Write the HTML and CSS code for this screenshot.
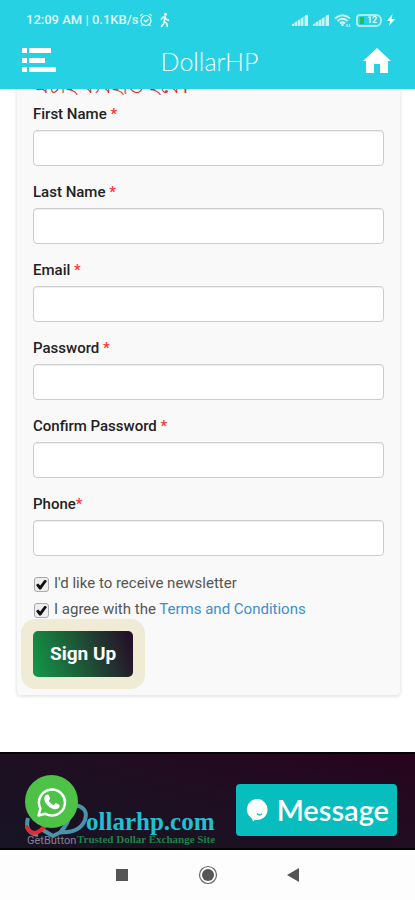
FILE: index.html
```html
<!DOCTYPE html>
<html lang="en">
<head>
<meta charset="utf-8">
<meta name="viewport" content="width=device-width, initial-scale=1">
<title>DollarHP</title>
<link rel="stylesheet" href="styles.css">
</head>
<body>
<header class="top">
  <div class="status">
    <span class="status-text">12:09 AM | 0.1KB/s</span>
    <svg class="alarm" width="14" height="14" viewBox="0 0 14 14" fill="none" stroke="currentColor" stroke-width="1.2"><circle cx="7" cy="7.5" r="5"/><path d="M1 3l2.500-2M13 3l-2.500-2M4.800 7l2 1.800L9.500 6M3.500 11.500L2.500 13M10.500 11.500l1 1.500"/></svg>
    <svg class="walk" width="12" height="16" viewBox="0 0 12 16" fill="none" stroke="currentColor" stroke-width="1.500"><circle cx="6.500" cy="2.200" r="1.500" fill="currentColor" stroke="none"/><path d="M2 8l1.500-2.500L6 4.800l1.500 2.700 2.500 1M6 5l-.8 4.500 2.500 2L8.500 15M5.200 9.500L4.500 12 2 15"/></svg>
    <span class="status-right">
      <svg width="16" height="12" viewBox="0 0 16 12" fill="currentColor" opacity=".75"><path d="M0 12v-2l16-10v12z" opacity=".5"/><path d="M0 10h2v2H0zM3 8h2v4H3zM6 6h2v6H6zM9 4h2v8H9zM13 1h3v11h-3z"/></svg>
      <svg width="16" height="12" viewBox="0 0 16 12" fill="currentColor" opacity=".75"><path d="M0 12v-2l16-10v12z" opacity=".5"/><path d="M0 10h2v2H0zM3 8h2v4H3zM6 6h2v6H6zM9 4h2v8H9zM13 1h3v11h-3z"/></svg>
      <svg width="17" height="13" viewBox="0 0 17 13" fill="none" stroke="currentColor" stroke-width="2" opacity=".8"><path d="M1 4.500q7.500-6.500 15 0M3.500 7q5-4.400 10 0M6 9.500q2.500-2.200 5 0M8.500 10v2"/><path d="M13 10v3M15.500 10v3" stroke-width="1.200"/></svg>
      <span class="battery"><span class="level"></span>12</span>
      <svg width="8" height="12" viewBox="0 0 8 12" fill="currentColor"><path d="M5.500 0L0 7h3.200L2 12l6-7H4.600z"/></svg>
    </span>
  </div>
  <div class="bar">
    <button class="icon-btn" type="button" aria-label="Menu"><svg width="34" height="25" viewBox="0 0 34 25" fill="currentColor"><path d="M0 0h5v5H0zM7 0h22v5H7zM0 10h5v5H0zM7 10h16v5H7zM0 19h5v5H0zM7 19h27v5H7z"/></svg></button>
    <h1 class="title">DollarHP</h1>
    <button class="icon-btn" type="button" aria-label="Home"><svg width="28" height="25" viewBox="0 0 28 25" fill="currentColor"><path d="M14 0l14 13h-3v12h-8v-9h-6v9H3V13H0z"/></svg></button>
  </div>
</header>
<main class="page">
  <form class="card">
    <p class="notice" lang="bn">এটাই ব্যবহৃত হবে।</p>
    <div class="field"><label for="first">First Name <span class="req">*</span></label><input id="first" type="text"></div>
    <div class="field"><label for="last">Last Name <span class="req">*</span></label><input id="last" type="text"></div>
    <div class="field"><label for="email">Email <span class="req">*</span></label><input id="email" type="email"></div>
    <div class="field"><label for="pass">Password <span class="req">*</span></label><input id="pass" type="password"></div>
    <div class="field"><label for="confirm">Confirm Password <span class="req">*</span></label><input id="confirm" type="password"></div>
    <div class="field last"><label for="phone">Phone<span class="req">*</span></label><input id="phone" type="tel"></div>
    <div class="check"><input id="news" type="checkbox" checked><label for="news">I'd like to receive newsletter</label></div>
    <div class="check"><input id="terms" type="checkbox" checked><label for="terms">I agree with the <a href="#terms">Terms and Conditions</a></label></div>
    <button class="signup" type="button">Sign Up</button>
  </form>
</main>
<footer class="footer">
  <div class="brand">
    <svg class="mark" width="66" height="38" viewBox="0 0 66 38" fill="none"><path d="M3 15q-4 15 10 17M16 26l12 7 8-4" stroke="#4b93a6" stroke-width="4"/><path d="M1 23q6 12 16 3l3-3" stroke="#e22a32" stroke-width="4"/><path d="M36 28Q43 22 46 8M34 29Q54 31 60 17Q64 5 50 2" stroke="#4b93a6" stroke-width="4"/></svg>
    <div class="words"><span class="name">ollarhp.com</span><span class="tagline">Trusted Dollar Exchange Site</span></div>
    <a class="whatsapp" href="#whatsapp" aria-label="WhatsApp"><svg width="30" height="30" viewBox="0 0 30 30"><path d="M1.500 28.500l1.900-7A13 13 0 1 1 8.300 26.700z" fill="none" stroke="#fff" stroke-width="2.500" stroke-linejoin="round"/><path d="M10.800 7.500c.5 0 .8.200 1 .7l1.200 2.900c.2.500 0 .9-.3 1.300l-1 1.200c1.100 2.100 2.800 3.700 5 4.600l1.400-1.700c.3-.4.700-.5 1.100-.3l3 1.500c.5.200.6.500.5 1-.3 2.200-1.800 3.500-4 3.600-5.400 0-11.600-6.100-11.500-10.900.1-1.700 1.400-3.900 3.600-3.900z" fill="#fff"/></svg></a>
    <a class="getbutton" href="#getbutton">GetButton</a>
  </div>
  <button class="message" type="button"><svg width="22" height="23" viewBox="0 0 22 23"><path d="M11 0a10.500 10.500 0 1 1-2 20.800L7 22.500l-1-3A10.500 10.500 0 0 1 11 0z" fill="#fff"/><path d="M11 14.500q3 3 5 0" fill="none" stroke="#08bdbe" stroke-width="1.300"/></svg>Message</button>
</footer>
<nav class="nav">
  <button type="button" aria-label="Recent apps"><svg width="20" height="20" viewBox="0 0 20 20"><path d="M4 4h12v12H4z" fill="#555"/></svg></button>
  <button type="button" aria-label="Home screen"><svg width="20" height="20" viewBox="0 0 20 20"><circle cx="10" cy="10" r="8.500" fill="none" stroke="#666" stroke-width="1.200"/><circle cx="10" cy="10" r="6" fill="#555"/></svg></button>
  <button type="button" aria-label="Back"><svg width="20" height="20" viewBox="0 0 20 20"><path d="M15 3v14L3 10z" fill="#555"/></svg></button>
</nav>
</body>
</html>
```
FILE: styles.css
```css
* { box-sizing: border-box; }
body {
  margin: 0;
  min-height: 100vh;
  display: flex;
  flex-direction: column;
  background: #fff;
  color: #333;
  font: 15px/20px Roboto, "Noto Sans", sans-serif;
}
button { border: 0; padding: 0; background: none; color: inherit; font: inherit; }
svg { display: block; flex: none; }

.top { position: relative; z-index: 1; background: #25d1e2; color: #fff; }
.status { display: flex; align-items: center; height: 40px; padding: 0 20px 0 26px; }
.status-text { font-size: 13px; font-weight: 500; opacity: .85; }
.alarm { margin-left: 1px; opacity: .9; }
.walk { margin-left: 6px; }
.status-right { display: flex; align-items: center; gap: 5px; margin-left: auto; }
.battery {
  display: flex;
  align-items: center;
  gap: 3px;
  width: 26px;
  height: 13px;
  padding: 0 2px;
  border: 2px solid #a9edf3;
  border-radius: 4px 6px 6px 4px;
  font-size: 9px;
  font-weight: 500;
}
.level { width: 4px; height: 7px; background: #2fb95b; }
.bar { display: flex; align-items: center; justify-content: space-between; height: 49px; padding: 0 24px 8px 22px; }
.title { margin: 0; font: 300 25px/32px Lato, sans-serif; }

.page { flex: 1; padding: 0 15px 0 17px; }
.card {
  margin-top: -16px;
  padding: 0 16px 18px;
  background: #f9f9f9;
  border-radius: 4px;
  box-shadow: 0 1px 3px 1px #e6e6e6;
}
.notice { margin: 0 0 4px; color: #e02b2b; font-size: 21px; line-height: 27px; }
.field { display: flex; flex-direction: column; gap: 6px; margin-bottom: 16px; }
.field.last { margin-bottom: 14px; }
.field label { color: #222; font-weight: 500; }
.req { color: #f33; }
.field input {
  width: 100%;
  height: 36px;
  padding: 0 12px;
  border: 1px solid #ccc;
  border-radius: 4px;
  background: #fff;
  box-shadow: inset 0 1px 1px #eee;
  font: inherit;
}
.check { display: flex; align-items: center; gap: 5px; height: 26px; padding-left: 1px; }
.check label { color: #555; }
.check input {
  appearance: none;
  display: grid;
  place-items: center;
  width: 15px;
  height: 15px;
  margin: 3px 0 0;
  border: 1px solid #aaa;
  border-radius: 3px;
  background: #eee;
}
.check input:checked::before {
  content: "";
  width: 11px;
  height: 10px;
  background: #111;
  clip-path: polygon(0 55%, 20% 40%, 38% 60%, 80% 0, 100% 15%, 45% 100%, 30% 100%);
}
.check a { color: #3c8fd0; text-decoration: none; }
.signup {
  display: block;
  height: 46px;
  margin-top: 9px;
  padding: 0 17px;
  border-radius: 5px;
  background: linear-gradient(70deg, #129a48, #1d5a37 45%, #260f29 95%);
  box-shadow: 0 0 0 12px #efebd5;
  color: #fff;
  font-size: 19px;
  font-weight: 700;
}

.footer {
  display: flex;
  align-items: flex-start;
  justify-content: space-between;
  height: 98px;
  padding: 0 18px 0 25px;
  border: solid #050208;
  border-width: 2px 0;
  background: linear-gradient(15deg, #171425, #200e22 55%, #28031e);
}
.brand { position: relative; display: flex; margin-top: 49px; }
.mark { margin-right: -5px; }
.words { display: flex; flex-direction: column; padding-top: 6px; }
.name { color: #20bfd1; font: 700 25px/25px "Liberation Serif", serif; }
.tagline { margin-left: -9px; color: #198447; font: 700 11px/11px "Liberation Serif", serif; white-space: nowrap; }
.whatsapp {
  position: absolute;
  top: -28px;
  left: 0;
  display: grid;
  place-items: center;
  width: 53px;
  height: 53px;
  border-radius: 50%;
  background: #4dc247;
}
.getbutton { position: absolute; top: 30px; left: 2px; color: #89818f; font-size: 11px; line-height: 16px; text-decoration: none; }
.message {
  display: flex;
  align-items: center;
  gap: 9px;
  height: 52px;
  margin-top: 30px;
  padding: 0 8px 0 10px;
  border-radius: 4px;
  background: #08bdbe;
  color: #fff;
  font: 600 29px/34px Lato, sans-serif;
}
.nav { display: flex; justify-content: center; gap: 66px; height: 50px; background: #fdfdfd; }
```
